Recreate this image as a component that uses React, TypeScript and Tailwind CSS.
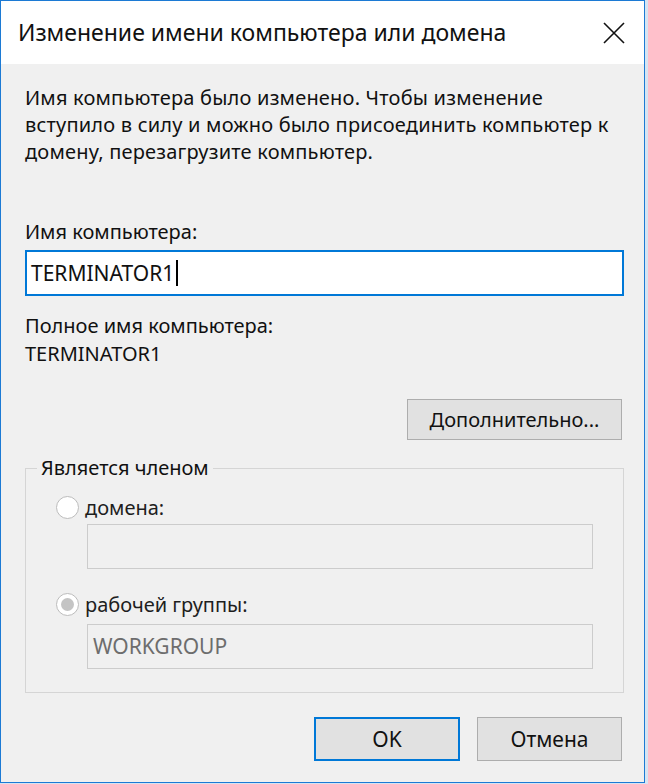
import { useState } from "react";

/* ---------------- Small pieces ---------------- */

function Radio({ checked }: { checked: boolean }) {
  return (
    <span className="flex h-[23px] w-[23px] shrink-0 items-center justify-center rounded-full border border-[#bcbcbc] bg-white">
      {checked && <span className="h-[13px] w-[13px] rounded-full bg-[#c4c4c4]" />}
    </span>
  );
}

function DisabledBox({ value }: { value?: string }) {
  return (
    <div className="ml-[61px] flex h-[45px] w-[506px] items-center border border-[#cccccc] bg-[#f0f0f0] px-[5px] text-[21px] text-[#6d6d6d]">
      {value}
    </div>
  );
}

/* ---------------- Dialog ---------------- */

export default function App() {
  const [name] = useState("TERMINATOR1");

  return (
    <div
      className="h-[784px] w-[648px] bg-[#d6e4f2]"
      style={{ fontFamily: '"Noto Sans", "Open Sans", sans-serif' }}
    >
      <div className="flex h-[783px] w-[645px] flex-col border border-[#1c7ad4] bg-[#f0f0f0] text-[#111]">
        {/* title bar */}
        <div className="flex h-[63px] shrink-0 items-center justify-between bg-white pl-[17px] pr-[18px]">
          <span className="text-[23px] leading-none">Изменение имени компьютера или домена</span>
          <svg width="22" height="22" viewBox="0 0 22 22" className="mr-[1px]">
            <path d="M1 1 L21 21 M21 1 L1 21" stroke="#111" strokeWidth="1.6" fill="none" />
          </svg>
        </div>

        {/* body */}
        <div className="flex flex-1 flex-col pl-[24px] pr-[20px] text-[20px] leading-[27px]">
          <p className="mt-[20px] pr-[8px] tracking-[0.2px]">
            Имя компьютера было изменено. Чтобы изменение вступило в силу и можно было
            присоединить компьютер к домену, перезагрузите компьютер.
          </p>

          <label className="mt-[53px]">Имя компьютера:</label>
          <div className="mt-[5px] flex h-[46px] items-center border-2 border-[#0078d7] bg-white pl-[4px] text-[21px]">
            <span>{name}</span>
            <span className="ml-[2px] h-[26px] w-[2px] bg-black" />
          </div>

          <p className="mt-[16px] leading-[28px]">Полное имя компьютера:</p>
          <p className="leading-[28px]">{name}</p>

          <div className="mt-[31px] flex justify-end pr-[2px]">
            <button className="h-[41px] w-[215px] border border-[#adadad] bg-[#e1e1e1] text-[20px]">
              Дополнительно...
            </button>
          </div>

          <fieldset className="mt-[14px] border border-[#d5d5d5] pb-[23px]">
            <legend className="ml-[11px] px-[4px] leading-[28px]">Является членом</legend>

            <div className="mt-[12px] flex items-center gap-[6px] pl-[30px] text-[#1e1e1e]">
              <Radio checked={false} />
              <span>домена:</span>
            </div>
            <div className="mt-[3px]">
              <DisabledBox />
            </div>

            <div className="mt-[22px] flex items-center gap-[6px] pl-[30px] text-[#1e1e1e]">
              <Radio checked />
              <span>рабочей группы:</span>
            </div>
            <div className="mt-[6px]">
              <DisabledBox value="WORKGROUP" />
            </div>
          </fieldset>

          <div className="mt-[24px] flex justify-end gap-[17px] pr-[2px]">
            <button className="h-[44px] w-[146px] border-2 border-[#0078d7] bg-[#e1e1e1] text-[21px]">
              OK
            </button>
            <button className="h-[44px] w-[145px] border border-[#adadad] bg-[#e1e1e1] text-[21px]">
              Отмена
            </button>
          </div>
        </div>
      </div>
    </div>
  );
}
